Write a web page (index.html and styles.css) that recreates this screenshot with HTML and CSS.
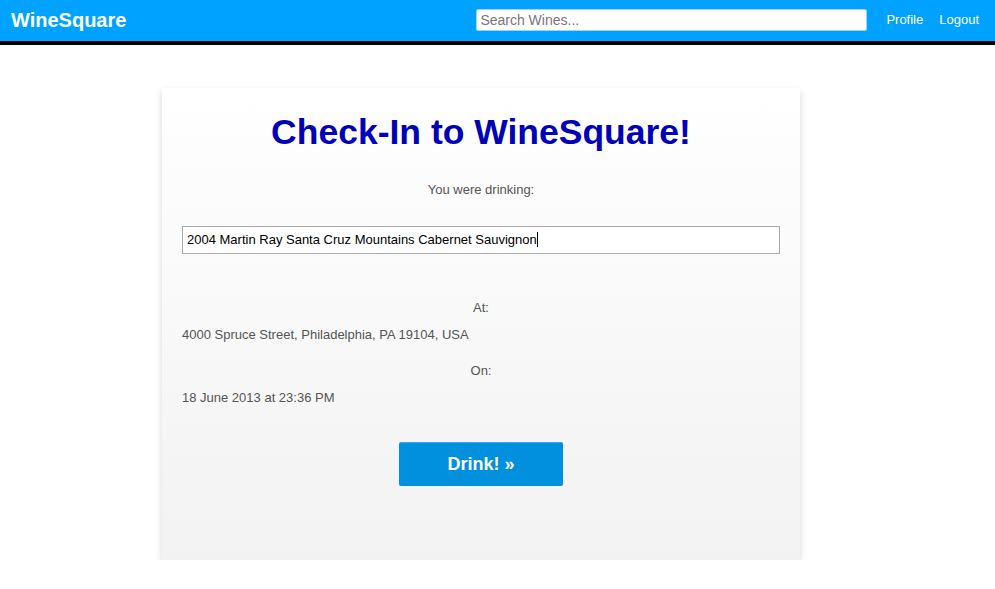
FILE: index.html
```html
<!DOCTYPE html>
<html>
<head>
<meta charset="utf-8">
<link rel="stylesheet" href="styles.css">
</head>
<body>
<header class="topbar">
  <div class="brand">WineSquare</div>
  <div class="topright">
    <input class="search" type="text" placeholder="Search Wines...">
    <nav class="nav">
      <a href="#">Profile</a>
      <a href="#">Logout</a>
    </nav>
  </div>
</header>
<main class="main">
  <section class="card">
    <h1 class="title">Check-In to WineSquare!</h1>
    <p class="label center first">You were drinking:</p>
    <div class="wine">2004 Martin Ray Santa Cruz Mountains Cabernet Sauvignon<span class="caret"></span></div>
    <p class="label center at">At:</p>
    <p class="label value">4000 Spruce Street, Philadelphia, PA 19104, USA</p>
    <p class="label center on">On:</p>
    <p class="label value">18 June 2013 at 23:36 PM</p>
    <div class="actions"><button class="btn">Drink! &raquo;</button></div>
  </section>
</main>
</body>
</html>
```
FILE: styles.css
```css
* { box-sizing: border-box; }
html, body { margin: 0; padding: 0; background: #fff; }
body { font-family: "Liberation Sans", Arial, sans-serif; }

.topbar {
  height: 45px;
  background: #00a2ff;
  border-bottom: 4px solid #000;
  display: flex;
  align-items: center;
  justify-content: space-between;
  padding: 0 16px 0 11px;
}
.brand { color: #fff; font-weight: bold; font-size: 20px; margin-top: -1px; }
.topright { display: flex; align-items: center; }
.search {
  width: 391px;
  height: 22px;
  border: 1px solid #9fd5f5;
  border-radius: 2px;
  padding: 0 3px;
  font-family: "Liberation Sans", Arial, sans-serif;
  font-size: 14px;
  color: #333;
  margin-top: -1px;
}
.search::placeholder { color: #777; }
.nav { display: flex; gap: 16px; margin-left: 19px; margin-top: -3px; }
.nav a { color: #fff; text-decoration: none; font-size: 13px; }

.main { display: flex; justify-content: center; padding: 43px 0 0 0; }
.card {
  width: 638px;
  height: 472px;
  margin-left: -33px;
  background: linear-gradient(#ffffff, #f2f2f2);
  box-shadow: 0 3px 7px rgba(0,0,0,0.16);
  padding: 21px 20px 0 20px;
}
.title {
  margin: 0;
  text-align: center;
  color: #0000b8;
  font-size: 35.5px;
  font-weight: bold;
  line-height: 46px;
}
.label { margin: 0; font-size: 13px; color: #555; line-height: 18px; }
.center { text-align: center; }
.first { margin-top: 26px; }
.wine {
  margin-top: 27px;
  height: 28px;
  border: 1px solid #aaa;
  background: #fff;
  font-size: 13px;
  color: #000;
  line-height: 26px;
  padding: 0 4px;
}
.caret { display: inline-block; width: 1px; height: 15px; background: #000; vertical-align: -3px; }
.at { margin-top: 45px; }
.value { margin-top: 9px; }
.on { margin-top: 18px; }
.actions { display: flex; justify-content: center; margin-top: 35px; }
.btn {
  width: 164px;
  height: 44px;
  background: #0090dd;
  border: none;
  border-top: 1px solid #33aaff;
  border-radius: 2px;
  color: #fff;
  font-family: "Liberation Sans", Arial, sans-serif;
  font-weight: bold;
  font-size: 18px;
}
```
